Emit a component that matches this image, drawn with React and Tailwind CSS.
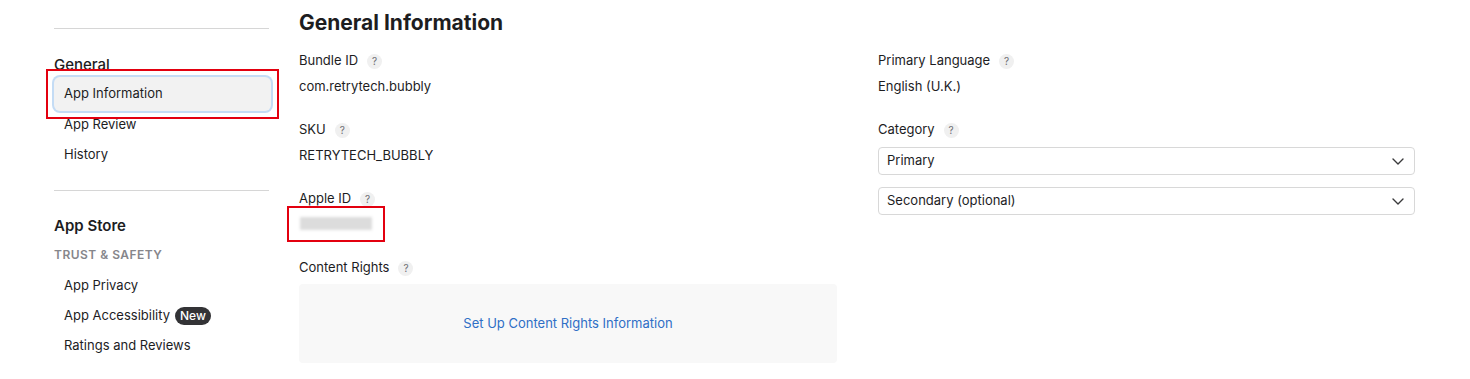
const Help = () => (
  <span className="ml-[9px] inline-flex h-[15px] w-[15px] items-center justify-center rounded-full bg-[#f0f0f0] text-[10px] leading-none text-[#6e6e73]">
    ?
  </span>
);

const Label = ({ children }) => (
  <div className="flex h-5 items-center text-[13px] text-[#1d1d1f]">
    {children}
    <Help />
  </div>
);

const Field = ({ label, children, className = "" }) => (
  <div className={className}>
    <Label>{label}</Label>
    <div className="mt-[6px] flex h-5 items-center text-[13px] text-[#1d1d1f]">{children}</div>
  </div>
);

const NavItem = ({ children }) => (
  <div className="flex h-[30px] items-center pl-[10px] text-[13px] text-[#1d1d1f]">{children}</div>
);

const Chevron = () => (
  <svg width="12" height="7" viewBox="0 0 12 7" fill="none" stroke="#3a3a3c" strokeWidth="1.4" strokeLinecap="round" strokeLinejoin="round">
    <path d="M1 1l5 5 5-5" />
  </svg>
);

const Select = ({ children, className = "" }) => (
  <div className={`flex h-[28px] items-center justify-between rounded-[4px] border border-[#d8d8d8] bg-white pl-[8px] pr-[10px] text-[13px] text-[#1d1d1f] ${className}`}>
    <span>{children}</span>
    <Chevron />
  </div>
);

export default function App() {
  return (
    <div className="flex h-[379px] w-[1470px] overflow-hidden bg-white pl-[54px] pr-[55px] font-['Inter',sans-serif] antialiased">
      {/* sidebar */}
      <aside className="w-[215px] shrink-0 pt-[28px]">
        <div className="border-t border-[#d6d6d6]" />
        <div className="mt-[26px] flex h-5 items-center text-[15px] font-medium text-[#1d1d1f]">General</div>
        <div className="relative mt-[2px] -mb-px w-[217px]">
          <div className="flex h-[34px] items-center rounded-[6px] bg-[#f2f2f2] pl-[10px] text-[13px] text-[#1d1d1f] ring-2 ring-[#c4dcf5]">
            App Information
          </div>
          <div className="pointer-events-none absolute -inset-2 border-2 border-[#e3000f]" />
        </div>
        <NavItem>App Review</NavItem>
        <NavItem>History</NavItem>
        <div className="mt-[20px] border-t border-[#d6d6d6]" />
        <div className="mt-[25px] flex h-5 items-center text-[15px] font-semibold text-[#1d1d1f]">App Store</div>
        <div className="mt-[11px] flex h-4 items-center text-[12px] font-semibold tracking-[0.04em] text-[#86868b]">
          TRUST &amp; SAFETY
        </div>
        <div className="mt-[8px]">
          <NavItem>App Privacy</NavItem>
          <NavItem>
            App Accessibility
            <span className="ml-[5px] flex h-[18px] items-center rounded-full bg-[#333336] px-[5px] text-[12px] font-medium text-white">
              New
            </span>
          </NavItem>
          <NavItem>Ratings and Reviews</NavItem>
        </div>
      </aside>

      {/* main */}
      <main className="ml-[30px] flex-1 pt-[9px]">
        <h1 className="flex h-[28px] items-center text-[21px] font-bold text-[#1d1d1f]">General Information</h1>
        <div className="mt-[14px] flex gap-[41px]">
          <div className="w-[538px]">
            <Field label="Bundle ID">com.retrytech.bubbly</Field>
            <Field label="SKU" className="mt-[23px]">RETRYTECH_BUBBLY</Field>
            <div className="mt-[23px]">
              <Label>Apple ID</Label>
              <div className="relative mt-[4px] h-5 w-[75px]">
                <div className="absolute left-[1px] top-[4px] h-[13px] w-[72px] bg-[#dcdcdc] blur-[1.5px]" />
                <div className="pointer-events-none absolute -top-[7px] -left-[12px] h-[36px] w-[98px] border-2 border-[#e3000f]" />
              </div>
            </div>
            <div className="mt-[25px]">
              <Label>Content Rights</Label>
              <div className="mt-[6px] flex h-[79px] items-center justify-center rounded-[4px] bg-[#f8f8f8] text-[13px] text-[#2f6fc6]">
                Set Up Content Rights Information
              </div>
            </div>
          </div>
          <div className="flex-1">
            <Field label="Primary Language">English (U.K.)</Field>
            <div className="mt-[23px]">
              <Label>Category</Label>
              <Select className="mt-[7px]">Primary</Select>
              <Select className="mt-[12px]">Secondary (optional)</Select>
            </div>
          </div>
        </div>
      </main>
    </div>
  );
}
